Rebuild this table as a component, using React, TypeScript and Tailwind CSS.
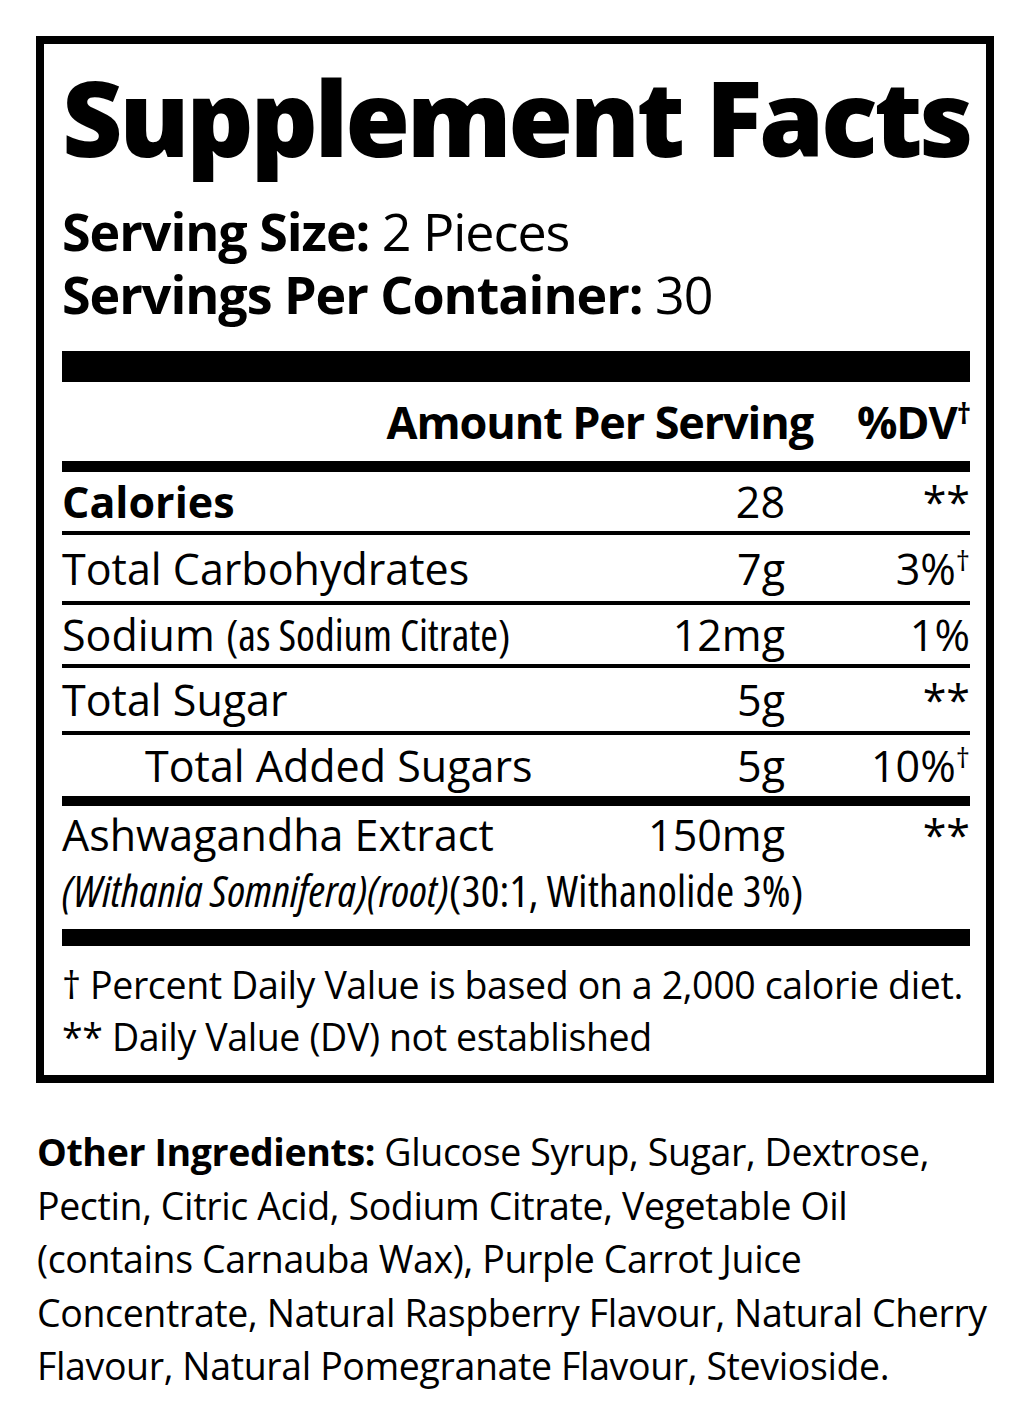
import React from 'react'

const sans = "font-['Open_Sans',sans-serif]"
const narrow = "font-['Liberation_Sans_Narrow','Open_Sans',sans-serif] font-stretch-condensed"

interface Nutrient {
  label: React.ReactNode
  amount: string
  dv: React.ReactNode
  height: string
  indent?: boolean
}

const Dagger = () => (
  <span className="relative -top-[14px] text-[28px] leading-none">†</span>
)

const nutrients: Nutrient[] = [
  { label: <span className="font-bold">Calories</span>, amount: '28', dv: '**', height: 'h-[59px]' },
  { label: 'Total Carbohydrates', amount: '7g', dv: <>3%<Dagger /></>, height: 'h-[66px]' },
  {
    label: (
      <>
        Sodium <span className={`${narrow} text-[43px]`}>(as Sodium Citrate)</span>
      </>
    ),
    amount: '12mg',
    dv: '1%',
    height: 'h-[59px]',
  },
  { label: 'Total Sugar', amount: '5g', dv: '**', height: 'h-[63px]' },
  { label: 'Total Added Sugars', amount: '5g', dv: <>10%<Dagger /></>, height: 'h-[61px]', indent: true },
]

function NutrientRow({ item }: { item: Nutrient }) {
  return (
    <div className={`grid grid-cols-[1fr_auto_185px] items-center text-[43px] leading-none ${item.height}`}>
      <div className={item.indent ? 'pl-[83px]' : ''}>{item.label}</div>
      <div className="text-right">{item.amount}</div>
      <div className="text-right">{item.dv}</div>
    </div>
  )
}

export default function App() {
  return (
    <div className={`${sans} w-[1031px] h-[1422px] bg-white text-black pt-[36px] pl-[36px]`}>
      <div className="w-[958px] border-[8px] border-black pl-[18px] pr-[16px]">
        {/* Title */}
        <h1 className="mt-[20px] text-[105px] font-extrabold leading-none tracking-[-0.032em] whitespace-nowrap">
          Supplement Facts
        </h1>

        {/* Serving info */}
        <div className="mt-[30px] text-[52px] leading-[63px] tracking-[-0.02em] whitespace-nowrap">
          <p>
            <span className="font-bold">Serving Size:</span> 2 Pieces
          </p>
          <p>
            <span className="font-bold">Servings Per Container:</span> 30
          </p>
        </div>

        <div className="mt-[26px] h-[31px] bg-black" />

        {/* Column header */}
        <div className="flex h-[79px] items-center justify-end gap-[44px] text-[45px] font-bold leading-none tracking-[-0.025em]">
          <span>Amount Per Serving</span>
          <span>
            %DV<span className="relative -top-[15px] text-[28px] font-bold">†</span>
          </span>
        </div>
        <div className="h-[11px] bg-black" />

        {nutrients.map((item, i) => (
          <div key={i}>
            <NutrientRow item={item} />
            {i < nutrients.length - 1 ? (
              <div className="h-[4px] bg-black" />
            ) : (
              <div className="h-[10px] bg-black" />
            )}
          </div>
        ))}

        {/* Ashwagandha */}
        <div className="h-[123px] pt-[3px]">
          <div className="grid grid-cols-[1fr_auto_185px] text-[43px] leading-[52px]">
            <div>Ashwagandha Extract</div>
            <div className="text-right">150mg</div>
            <div className="text-right">**</div>
          </div>
          <p className={`${narrow} mt-[3px] text-[44px] leading-[52px] tracking-[0.005em] whitespace-nowrap`}>
            <span className="italic">(Withania Somnifera)(root)</span>(30:1, Withanolide 3%)
          </p>
        </div>
        <div className="h-[17px] bg-black" />

        {/* Footnotes */}
        <div className="h-[129px] pt-[13px] text-[37.5px] leading-[52px] tracking-[-0.01em] whitespace-nowrap">
          <p>† Percent Daily Value is based on a 2,000 calorie diet.</p>
          <p>** Daily Value (DV) not established</p>
        </div>
      </div>

      {/* Other ingredients */}
      <p className="mt-[42px] pl-[1px] text-[37.5px] leading-[53.5px] tracking-[-0.01em] whitespace-nowrap">
        <span className="font-bold">Other Ingredients:</span> Glucose Syrup, Sugar, Dextrose,
        <br />
        Pectin, Citric Acid, Sodium Citrate, Vegetable Oil
        <br />
        (contains Carnauba Wax), Purple Carrot Juice
        <br />
        Concentrate, Natural Raspberry Flavour, Natural Cherry
        <br />
        Flavour, Natural Pomegranate Flavour, Stevioside.
      </p>
    </div>
  )
}
